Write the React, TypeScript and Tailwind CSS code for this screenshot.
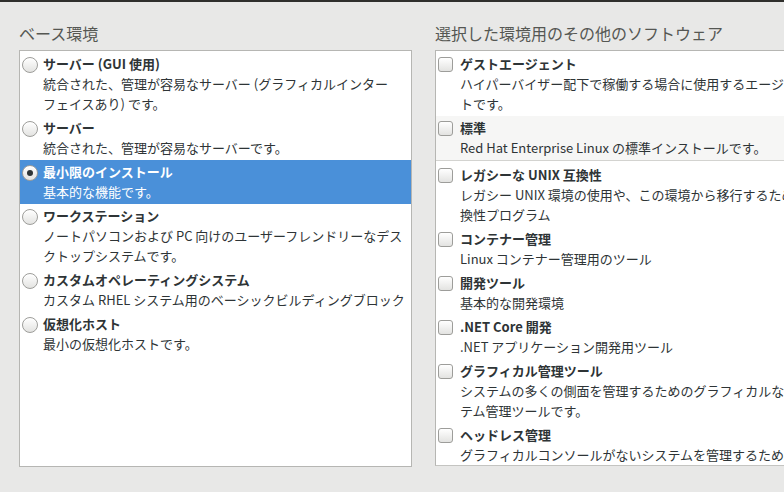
type Item = {
  title: string;
  lines: string[];
};

const baseEnvs: Item[] = [
  {
    title: "サーバー (GUI 使用)",
    lines: ["統合された、管理が容易なサーバー (グラフィカルインター", "フェイスあり) です。"],
  },
  { title: "サーバー", lines: ["統合された、管理が容易なサーバーです。"] },
  { title: "最小限のインストール", lines: ["基本的な機能です。"] },
  {
    title: "ワークステーション",
    lines: ["ノートパソコンおよび PC 向けのユーザーフレンドリーなデス", "クトップシステムです。"],
  },
  {
    title: "カスタムオペレーティングシステム",
    lines: ["カスタム RHEL システム用のベーシックビルディングブロック"],
  },
  { title: "仮想化ホスト", lines: ["最小の仮想化ホストです。"] },
];

const envAddons: Item[] = [
  {
    title: "ゲストエージェント",
    lines: ["ハイパーバイザー配下で稼働する場合に使用するエージェン", "トです。"],
  },
  { title: "標準", lines: ["Red Hat Enterprise Linux の標準インストールです。"] },
];

const otherAddons: Item[] = [
  {
    title: "レガシーな UNIX 互換性",
    lines: ["レガシー UNIX 環境の使用や、この環境から移行するための互", "換性プログラム"],
  },
  { title: "コンテナー管理", lines: ["Linux コンテナー管理用のツール"] },
  { title: "開発ツール", lines: ["基本的な開発環境"] },
  { title: ".NET Core 開発", lines: [".NET アプリケーション開発用ツール"] },
  {
    title: "グラフィカル管理ツール",
    lines: ["システムの多くの側面を管理するためのグラフィカルなシス", "テム管理ツールです。"],
  },
  {
    title: "ヘッドレス管理",
    lines: ["グラフィカルコンソールがないシステムを管理するためのツール"],
  },
];

function Radio({ checked }: { checked?: boolean }) {
  return (
    <span className="mt-[3px] flex h-4 w-4 shrink-0 items-center justify-center rounded-full border border-[#9d9d9a] bg-gradient-to-b from-white to-[#e3e3e1] shadow-[inset_0_1px_0_white]">
      {checked && <span className="h-[6px] w-[6px] rounded-full bg-[#2e3436]" />}
    </span>
  );
}

function Checkbox() {
  return (
    <span className="mt-[3px] h-[15px] w-[15px] shrink-0 rounded-[3px] border border-[#9d9d9a] bg-gradient-to-b from-white to-[#e3e3e1]" />
  );
}

function Row({
  item,
  kind,
  selected,
  hovered,
}: {
  item: Item;
  kind: "radio" | "check";
  selected?: boolean;
  hovered?: boolean;
}) {
  return (
    <div
      className={`flex py-[2px] ${
        selected
          ? "bg-[#4a90d9] text-white"
          : hovered
            ? "bg-[#f6f6f5] text-[#2e3436]"
            : "text-[#2e3436]"
      } ${kind === "radio" ? "gap-[5px] pl-[2px]" : "gap-[7px] pl-[2px]"}`}
    >
      {kind === "radio" ? <Radio checked={selected} /> : <Checkbox />}
      <div className="whitespace-nowrap text-[13px] leading-[20px]">
        <div className="font-bold">{item.title}</div>
        {item.lines.map((l) => (
          <div key={l}>{l}</div>
        ))}
      </div>
    </div>
  );
}

export default function App() {
  return (
    <div className="flex h-[492px] w-[784px] flex-col overflow-hidden bg-[#e8e8e7] font-['Noto_Sans_CJK_JP','Noto_Sans',sans-serif]">
      {/* top header edge */}
      <div className="h-[2px] bg-[#2f2f2c]" />

      <div className="flex gap-[23px] pl-[19px] pt-[21px]">
        {/* Base environment */}
        <div className="w-[393px] shrink-0">
          <h2 className="mb-[7px] text-[16px] leading-[20px] text-[#555753]">ベース環境</h2>
          <div className="h-[417px] border border-[#b6b6b3] bg-white pt-[1px]">
            {baseEnvs.map((e, i) => (
              <Row key={e.title} item={e} kind="radio" selected={i === 2} />
            ))}
          </div>
        </div>

        {/* Add-ons */}
        <div className="w-[393px] shrink-0">
          <h2 className="mb-[7px] text-[16px] leading-[20px] text-[#555753]">
            選択した環境用のその他のソフトウェア
          </h2>
          <div className="h-[416px] overflow-hidden border border-b-[#c4c4c1] border-[#b6b6b3] bg-white pt-[1px]">
            {envAddons.map((e, i) => (
              <Row key={e.title} item={e} kind="check" hovered={i === 1} />
            ))}
            <div className="mb-[2px] h-px bg-[#d3d3d0]" />
            {otherAddons.map((e) => (
              <Row key={e.title} item={e} kind="check" />
            ))}
          </div>
        </div>
      </div>
    </div>
  );
}
